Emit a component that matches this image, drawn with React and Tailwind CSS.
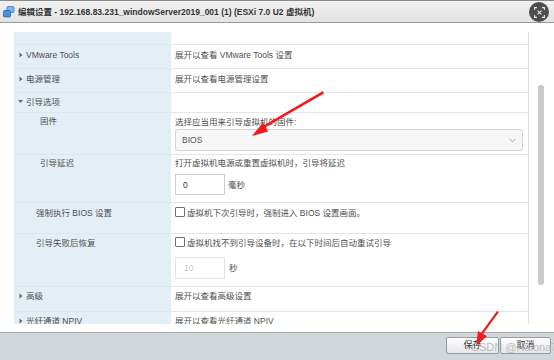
import React from "react";

const Tri = ({ down }) =>
  down ? (
    <svg width="5" height="5" viewBox="0 0 5 5" className="shrink-0">
      <polygon points="0,1 5,1 2.5,4" fill="#6b6b6b" />
    </svg>
  ) : (
    <svg width="4" height="6" viewBox="0 0 4 6" className="shrink-0">
      <polygon points="0.5,0.5 3.5,3 0.5,5.5" fill="#6b6b6b" />
    </svg>
  );

const Row = ({ h, left, children, leftClass = "", rightClass = "" }) => (
  <div
    className={`grid grid-cols-[157px_1fr] border-b border-[#e1e6ea]`}
    style={{ height: h }}
  >
    <div className={`bg-[#e4eef5] ${leftClass}`}>{left}</div>
    <div className={`pl-[4px] ${rightClass}`}>{children}</div>
  </div>
);

const Check = () => (
  <span className="inline-block w-[10px] h-[10px] border border-[#6f6f6f] rounded-[1px] bg-white mr-[2px] align-[-1px]" />
);

export default function App() {
  return (
    <div className="relative w-[554px] h-[360px] overflow-hidden bg-white font-['Liberation_Sans','Noto_Sans_CJK_SC',sans-serif] text-[8.5px] leading-[14px] text-[#4f4f4f]">
      {/* title bar */}
      <div className="h-[23px] flex items-center border-t border-[#8a8a8a] border-b border-b-[#9c9c9c] bg-gradient-to-b from-[#f1f1f1] to-[#e3e3e3] pl-[3px]">
        <svg width="12" height="12" viewBox="0 0 12 12" className="shrink-0">
          <rect x="4" y="0.5" width="7" height="6" rx="1" fill="#7fb6e6" stroke="#3b7dc0" strokeWidth="0.8" />
          <rect x="0.5" y="4.5" width="7" height="6.5" rx="1" fill="#4a90d9" stroke="#2a66a8" strokeWidth="0.8" />
        </svg>
        <span className="ml-[3px] font-bold text-[#333] text-[8.5px]">
          编辑设置 - 192.168.83.231_windowServer2019_001 (1) (ESXi 7.0 U2 虚拟机)
        </span>
        <div className="ml-auto mr-[5px] mt-[1px] w-[20px] h-[20px] rounded-full bg-[#4e4e4e] flex items-center justify-center">
          <svg width="11" height="11" viewBox="0 0 11 11" fill="none" stroke="#e8e8e8" strokeWidth="1.1">
            <path d="M0.6 3V0.6H3 M8 0.6H10.4V3 M10.4 8V10.4H8 M3 10.4H0.6V8" />
            <path d="M3.6 3.6L7.4 7.4 M7.4 3.6L3.6 7.4" />
          </svg>
        </div>
      </div>

      {/* body */}
      <div className="h-[301px] overflow-hidden pt-[9px] pl-[14px] flex">
        <div className="w-[515px] shrink-0 border-r border-[#dedede] h-[292px] overflow-hidden">
          <Row h={13} left={null} />
          <Row
            h={24}
            leftClass="flex items-start pt-[3px] pl-[5px] gap-[3px]"
            rightClass="pt-[3px]"
            left={
              <>
                <span className="mt-[4px]"><Tri /></span>
                <span>VMware Tools</span>
              </>
            }
          >
            展开以查看 VMware Tools 设置
          </Row>
          <Row
            h={24}
            leftClass="flex items-start pt-[3px] pl-[5px] gap-[3px]"
            rightClass="pt-[3px]"
            left={
              <>
                <span className="mt-[4px]"><Tri /></span>
                <span>电源管理</span>
              </>
            }
          >
            展开以查看电源管理设置
          </Row>
          <Row
            h={20}
            leftClass="flex items-start pt-[2px] pl-[4px] gap-[3px]"
            left={
              <>
                <span className="mt-[4px]"><Tri down /></span>
                <span>引导选项</span>
              </>
            }
          />
          <Row h={42} leftClass="pt-[1px] pl-[26px]" rightClass="pt-[2px] pr-[5px]" left="固件">
            <div>选择应当用来引导虚拟机的固件:</div>
            <div className="h-[22px] border border-[#d4d4d4] rounded-[3px] bg-[#f7f7f7] flex items-center pl-[6px] pr-[6px] text-[#555]">
              <span>BIOS</span>
              <svg className="ml-auto" width="7" height="5" viewBox="0 0 7 5" fill="none" stroke="#999" strokeWidth="0.9">
                <path d="M0.5 0.8L3.5 3.8L6.5 0.8" />
              </svg>
            </div>
          </Row>
          <Row h={48} leftClass="pt-[1px] pl-[26px]" rightClass="pt-[1px]" left="引导延迟">
            <div>打开虚拟机电源或重置虚拟机时，引导将延迟</div>
            <div className="mt-[4px] flex items-center">
              <div className="w-[50px] h-[21px] border border-[#cfcfcf] flex items-center pl-[7px] text-[#333]">0</div>
              <span className="ml-[3px]">毫秒</span>
            </div>
          </Row>
          <Row h={31} leftClass="pt-[3px] pl-[22px]" rightClass="pt-[3px]" left="强制执行 BIOS 设置">
            <div>
              <Check />
              虚拟机下次引导时，强制进入 BIOS 设置画面。
            </div>
          </Row>
          <Row h={53} leftClass="pt-[2px] pl-[22px]" rightClass="pt-[2px]" left="引导失败后恢复">
            <div>
              <Check />
              虚拟机找不到引导设备时，在以下时间后自动重试引导
            </div>
            <div className="mt-[7px] flex items-center">
              <div className="w-[50px] h-[22px] border border-[#e2e2e2] flex items-center pl-[8px] text-[#c4c4c4]">10</div>
              <span className="ml-[4px]">秒</span>
            </div>
          </Row>
          <Row
            h={25}
            leftClass="flex items-start pt-[2px] pl-[5px] gap-[3px]"
            rightClass="pt-[2px]"
            left={
              <>
                <span className="mt-[4px]"><Tri /></span>
                <span>高级</span>
              </>
            }
          >
            展开以查看高级设置
          </Row>
          <Row
            h={30}
            leftClass="flex items-start pt-[2px] pl-[5px] gap-[3px]"
            rightClass="pt-[2px]"
            left={
              <>
                <span className="mt-[4px]"><Tri /></span>
                <span>光纤通道 NPIV</span>
              </>
            }
          >
            展开以查看光纤通道 NPIV
          </Row>
        </div>
        <div className="ml-[9px] mt-[53px] w-[6px] h-[200px] rounded-[3px] bg-[#c9c9c9] shrink-0" />
      </div>

      <div className="h-[8px]" />

      {/* footer */}
      <div className="h-[28px] border-t border-[#a9acb0] bg-[#d2d7dc] flex items-start justify-end pt-[4px] pr-[3px] gap-[1px]">
        <button className="w-[53px] h-[17px] border border-[#9a9a9a] rounded-[2px] bg-gradient-to-b from-[#ffffff] to-[#e6e6e6] text-[9px] leading-[15px] text-[#333]">
          保存
        </button>
        <button className="w-[51px] h-[17px] border border-[#9a9a9a] rounded-[2px] bg-gradient-to-b from-[#ffffff] to-[#e6e6e6] text-[9px] leading-[15px] text-[#333]">
          取消
        </button>
      </div>

      {/* annotations */}
      <svg className="absolute left-0 top-0 pointer-events-none" width="554" height="360" viewBox="0 0 554 360">
        <polygon points="323,91 324,93.5 266,127 268,131.5 252,136 263,122.5 264.5,125" fill="#f21b1b" />
        <polygon points="497,311 499,312 483,334 487,336 476,346 478,331 481,333" fill="#f21b1b" />
      </svg>
      <div className="absolute left-[471px] top-[341px] text-[11px] leading-[13px] text-[#aeb3b9] opacity-80 font-['Liberation_Sans',sans-serif] whitespace-nowrap">
        CSDN @Halona7
      </div>
    </div>
  );
}
